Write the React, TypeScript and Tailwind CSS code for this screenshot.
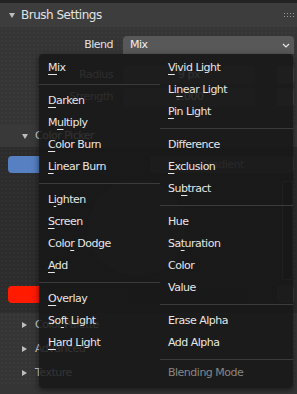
import React from "react";

type Entry =
  | { kind: "item"; label: string; key: number }
  | { kind: "sep" }
  | { kind: "title"; label: string };

const item = (label: string, key = -1): Entry => ({ kind: "item", label, key });
const sep: Entry = { kind: "sep" };

const leftColumn: Entry[] = [
  item("Mix", 0),
  sep,
  item("Darken", 0),
  item("Multiply", 1),
  item("Color Burn", 0),
  item("Linear Burn", 0),
  sep,
  item("Lighten", 1),
  item("Screen", 0),
  item("Color Dodge", 4),
  item("Add", 0),
  sep,
  item("Overlay", 0),
  item("Soft Light", 2),
  item("Hard Light", 0),
];

const rightColumn: Entry[] = [
  item("Vivid Light", 0),
  item("Linear Light", 2),
  item("Pin Light", 0),
  sep,
  item("Difference"),
  item("Exclusion", 0),
  item("Subtract", 2),
  sep,
  item("Hue"),
  item("Saturation", 2),
  item("Color"),
  item("Value"),
  sep,
  item("Erase Alpha"),
  item("Add Alpha"),
  sep,
  { kind: "title", label: "Blending Mode" },
];

function Label({ label, keyIndex }: { label: string; keyIndex: number }) {
  if (keyIndex < 0) return <span>{label}</span>;
  return (
    <span>
      {label.slice(0, keyIndex)}
      <span className="underline decoration-1 underline-offset-[3px]">{label[keyIndex]}</span>
      {label.slice(keyIndex + 1)}
    </span>
  );
}

function MenuColumn({ entries, indent }: { entries: Entry[]; indent: string }) {
  return (
    <div className="flex flex-col pt-[3px]">
      {entries.map((e, i) => {
        if (e.kind === "sep") {
          return (
            <div key={i} className="h-[11px] flex items-center">
              <div className="h-px w-full bg-[#3b3b3b]" />
            </div>
          );
        }
        if (e.kind === "title") {
          return (
            <div key={i} className={`h-[15px] leading-[15px] text-[#868686] ${indent}`}>
              {e.label}
            </div>
          );
        }
        return (
          <div key={i} className={`h-[22px] leading-[22px] text-[#e6e6e6] ${indent}`}>
            <Label label={e.label} keyIndex={e.key} />
          </div>
        );
      })}
    </div>
  );
}

function DownTriangle() {
  return (
    <svg width="6" height="5" viewBox="0 0 6 5">
      <path d="M0 0 H6 L3 5 Z" fill="#bdbdbd" />
    </svg>
  );
}

function RightTriangle() {
  return (
    <svg width="5" height="6" viewBox="0 0 5 6">
      <path d="M0 0 L5 3 L0 6 Z" fill="#bdbdbd" />
    </svg>
  );
}

function Grip() {
  return (
    <div className="grid grid-cols-4 gap-x-[2px] gap-y-[2px]">
      {Array.from({ length: 8 }).map((_, i) => (
        <div key={i} className="w-px h-px bg-[#9a9a9a]" />
      ))}
    </div>
  );
}

const dots =
  "bg-[radial-gradient(circle,rgba(255,255,255,0.05)_0.6px,transparent_0.8px)] bg-[length:4px_4px]";

function SubHeader({ title }: { title: string }) {
  return (
    <div className="h-[24px] flex items-center pl-[22px] text-[#cfcfcf]">
      <RightTriangle />
      <span className="ml-[8px]">{title}</span>
    </div>
  );
}

export default function App() {
  return (
    <div className="relative w-[297px] h-[394px] overflow-hidden bg-[#353535] font-['DejaVu_Sans',sans-serif] text-[11px] tracking-[-0.5px]">
      <div className="h-[3px] bg-[#232323]" />
      <div className="h-[24px] bg-[#3d3d3d] flex items-center pl-[9px] pr-[3px]">
        <DownTriangle />
        <span className="ml-[6px] text-[12px] text-[#e2e2e2]">Brush Settings</span>
        <div className="ml-auto">
          <Grip />
        </div>
      </div>

      <div className={`h-[98px] pt-[9px] ${dots}`}>
        <div className="h-[18px] flex">
          <div className="w-[113px] text-right leading-[18px] text-[#e2e2e2]">Blend</div>
          <div className="ml-[10px] w-[171px] rounded-t-[4px] bg-[#585858] flex items-center pl-[7px] pr-[4px] text-[#f0f0f0]">
            <span>Mix</span>
            <svg className="ml-auto" width="8" height="5" viewBox="0 0 8 5">
              <path d="M1 1 L4 4 L7 1" fill="none" stroke="#e6e6e6" strokeWidth="1.2" />
            </svg>
          </div>
        </div>
        <div className="mt-[12px] h-[18px] flex">
          <div className="w-[113px] text-right leading-[18px] text-[#b0b0b0]">Radius</div>
          <div className="ml-[10px] w-[132px] rounded-[4px] bg-[#444444] text-center leading-[18px] text-[#c8c8c8]">
            9 px
          </div>
          <div className="ml-[3px] w-[17px]" />
          <div className="ml-[2px] w-[17px] rounded-[3px] bg-[#4c4c4c]" />
        </div>
        <div className="mt-[4px] h-[18px] flex">
          <div className="w-[113px] text-right leading-[18px] text-[#b0b0b0]">Strength</div>
          <div className="ml-[10px] w-[132px] rounded-[4px] bg-[#444444] text-center leading-[18px] text-[#c8c8c8]">
            1.000
          </div>
          <div className="ml-[3px] w-[17px]" />
          <div className="ml-[2px] w-[17px] rounded-[3px] bg-[#4c4c4c]" />
        </div>
      </div>

      <div className="h-[22px] bg-[#393939] flex items-center pl-[22px] text-[#cfcfcf]">
        <DownTriangle />
        <span className="ml-[7px]">Color Picker</span>
      </div>

      <div className={`h-[166px] bg-[#2c2c2c] pt-[9px] ${dots}`}>
        <div className="h-[17px] flex pl-[8px]">
          <div className="w-[32px] rounded-l-[4px] bg-[#5680c2]" />
          <div className="ml-[110px] w-[144px] rounded-[4px] bg-[#3c3c3c] text-center leading-[17px] text-[#8a8a8a]">
            Gradient
          </div>
        </div>
        <div className="h-[113px] flex items-start">
          <div className="ml-[89px] mt-[7px] w-[96px] h-[96px] rounded-full bg-[#3a3a3a]" />
          <div className="ml-auto mr-[4px] mt-[8px] w-[11px] h-[99px] rounded-[2px] border border-[#505050] bg-[#252525]" />
        </div>
        <div className="h-[17px] flex pl-[8px]">
          <div className="w-[32px] rounded-l-[4px] bg-[#ff1a00]" />
          <div className="ml-[88px] w-[119px] rounded-[4px] bg-[#292929]" />
          <div className="ml-[11px] w-[17px]" />
          <div className="ml-[2px] w-[17px] rounded-[3px] bg-[#404040]" />
        </div>
      </div>

      <div className={dots}>
        <SubHeader title="Color Palette" />
        <SubHeader title="Advanced" />
        <SubHeader title="Texture" />
      </div>

      <div className="absolute left-[39px] top-[54px] w-[254px] h-[334px] rounded-[4px] bg-[#161616]/85 shadow-[0_2px_6px_rgba(0,0,0,0.55)] flex">
        <div className="w-[121px]">
          <MenuColumn entries={leftColumn} indent="pl-[9px]" />
        </div>
        <div className="flex-1">
          <MenuColumn entries={rightColumn} indent="pl-[8px]" />
        </div>
      </div>
    </div>
  );
}
